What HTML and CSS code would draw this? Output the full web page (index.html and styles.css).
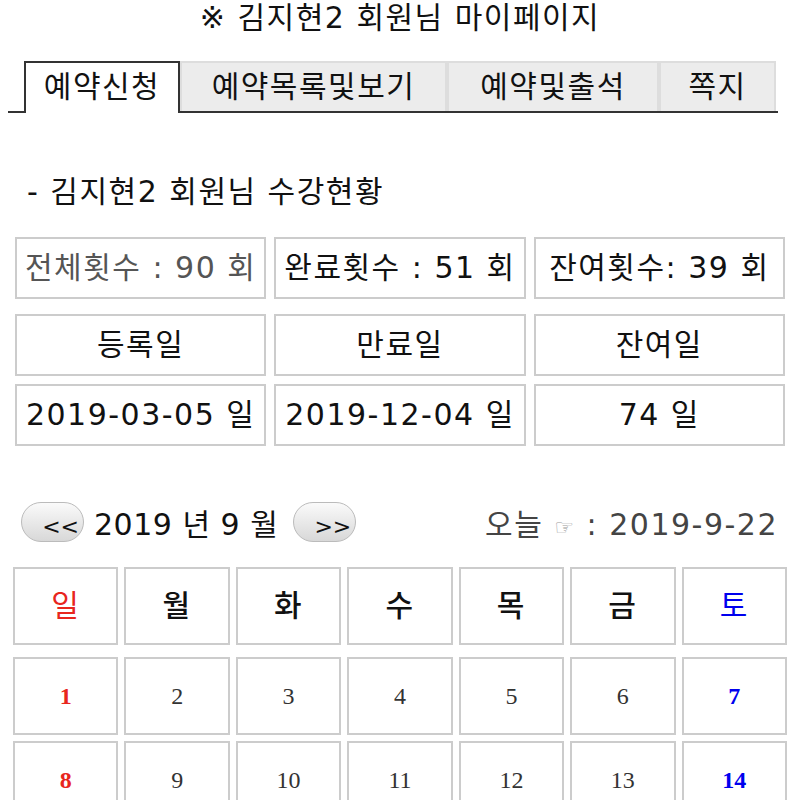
FILE: index.html
```html
<!DOCTYPE html>
<html lang="ko">
<head>
    <meta charset="UTF-8">
    <meta name="viewport" content="width=device-width, initial-scale=1.0">
    <title>마이페이지</title>
    <link rel="stylesheet" href="styles.css">
</head>
<body>

    <h1 class="title">※ 김지현2 회원님 마이페이지</h1>

    <div class="tabs">
        <div class="tab active">예약신청</div>
        <div class="tab t2">예약목록및보기</div>
        <div class="tab t3">예약및출석</div>
        <div class="tab t4">쪽지</div>
    </div>

    <h2 class="subtitle">- 김지현2 회원님 수강현황</h2>

    <div class="info first">
        <div class="box grey">전체횟수 : 90 회</div>
        <div class="box">완료횟수 : 51 회</div>
        <div class="box">잔여횟수: 39 회</div>
    </div>
    <div class="info second">
        <div class="box">등록일</div>
        <div class="box">만료일</div>
        <div class="box">잔여일</div>
    </div>
    <div class="info third">
        <div class="box">2019-03-05 일</div>
        <div class="box">2019-12-04 일</div>
        <div class="box">74 일</div>
    </div>

    <div class="nav">
        <button class="btn">&lt;&lt;</button>
        <span class="month">2019 년 9 월</span>
        <button class="btn">&gt;&gt;</button>
        <span class="today">오늘 <span class="hand">☞</span> : 2019-9-22</span>
    </div>

    <div class="cal head">
        <div class="cell sun">일</div>
        <div class="cell">월</div>
        <div class="cell">화</div>
        <div class="cell">수</div>
        <div class="cell">목</div>
        <div class="cell">금</div>
        <div class="cell sat">토</div>
    </div>
    <div class="cal days">
        <div class="cell sun">1</div>
        <div class="cell">2</div>
        <div class="cell">3</div>
        <div class="cell">4</div>
        <div class="cell">5</div>
        <div class="cell">6</div>
        <div class="cell sat">7</div>
        <div class="cell sun">8</div>
        <div class="cell">9</div>
        <div class="cell">10</div>
        <div class="cell">11</div>
        <div class="cell">12</div>
        <div class="cell">13</div>
        <div class="cell sat">14</div>
    </div>

</body>
</html>
```

FILE: styles.css
```css
body {
    font-family: "DejaVu Sans", "Noto Sans CJK KR", sans-serif;
    margin: 0 8px;
    color: #111;
    background: #fff;
    letter-spacing: 1.5px;
}
.title {
    font-size: 30px;
    font-weight: normal;
    text-align: center;
    line-height: 36px;
    margin: 0;
}
.tabs {
    display: flex;
    margin-top: 25px;
    margin-right: 14px;
    padding-left: 16px;
    border-bottom: 2px solid #333;
    height: 50px;
}
.tab {
    font-size: 30px;
    text-align: center;
    line-height: 48px;
    background: #ececec;
    border: 2px solid #ddd;
    border-bottom: none;
    box-sizing: border-box;
    height: 50px;
    white-space: nowrap;
}
.tab.active {
    width: 156px;
    background: #fff;
    border: 2px solid #333;
    border-bottom: none;
    height: 52px;
}
.t2 { width: 267px; }
.t3 { width: 212px; }
.t4 { width: 117px; }
.subtitle {
    font-size: 30px;
    font-weight: normal;
    margin: 64px 0 0 19px;
    line-height: 30px;
}
.info {
    display: grid;
    grid-template-columns: repeat(3, 1fr);
    gap: 8px;
    margin: 0 7px;
}
.info.first { margin-top: 30px; }
.info.second { margin-top: 15px; }
.info.third { margin-top: 8px; }
.box {
    border: 2px solid #ccc;
    height: 62px;
    box-sizing: border-box;
    font-size: 30px;
    line-height: 58px;
    text-align: center;
    white-space: nowrap;
}
.grey { color: #555; }
.nav {
    display: flex;
    align-items: center;
    margin: 56px 14px 0 13px;
    height: 40px;
}
.btn {
    width: 63px;
    height: 40px;
    border: 1px solid #bbb;
    border-radius: 20px;
    background: linear-gradient(#fafafa, #d8d8d8);
    font-family: "DejaVu Sans", sans-serif;
    font-size: 22px;
    letter-spacing: 0;
    color: #111;
    padding: 10px 4px 0 0;
    text-align: right;
    line-height: 26px;
}
.month {
    font-size: 30px;
    margin: 0 15px 0 10px;
    letter-spacing: 0.5px;
    white-space: nowrap;
}
.today {
    margin-left: auto;
    font-size: 30px;
    color: #444;
    white-space: nowrap;
}
.hand {
    color: #999;
    font-size: 22px;
}
.cal {
    display: grid;
    grid-template-columns: repeat(7, 1fr);
    gap: 6px;
    margin: 0 5px;
}
.cal.head { margin-top: 25px; }
.cal.days { margin-top: 12px; }
.cell {
    border: 2px solid #ccc;
    box-sizing: border-box;
    text-align: center;
}
.head .cell {
    height: 78px;
    line-height: 74px;
    font-size: 30px;
    font-weight: 500;
}
.days .cell {
    height: 78px;
    line-height: 74px;
    font-family: "Liberation Serif", serif;
    font-size: 24px;
    color: #333;
    letter-spacing: 0;
}
.head .sun { color: #e8261d; font-weight: normal; }
.head .sat { color: #0000ee; font-weight: normal; }
.days .sun { color: #e8261d; font-weight: bold; }
.days .sat { color: #0000ee; font-weight: bold; }
```
